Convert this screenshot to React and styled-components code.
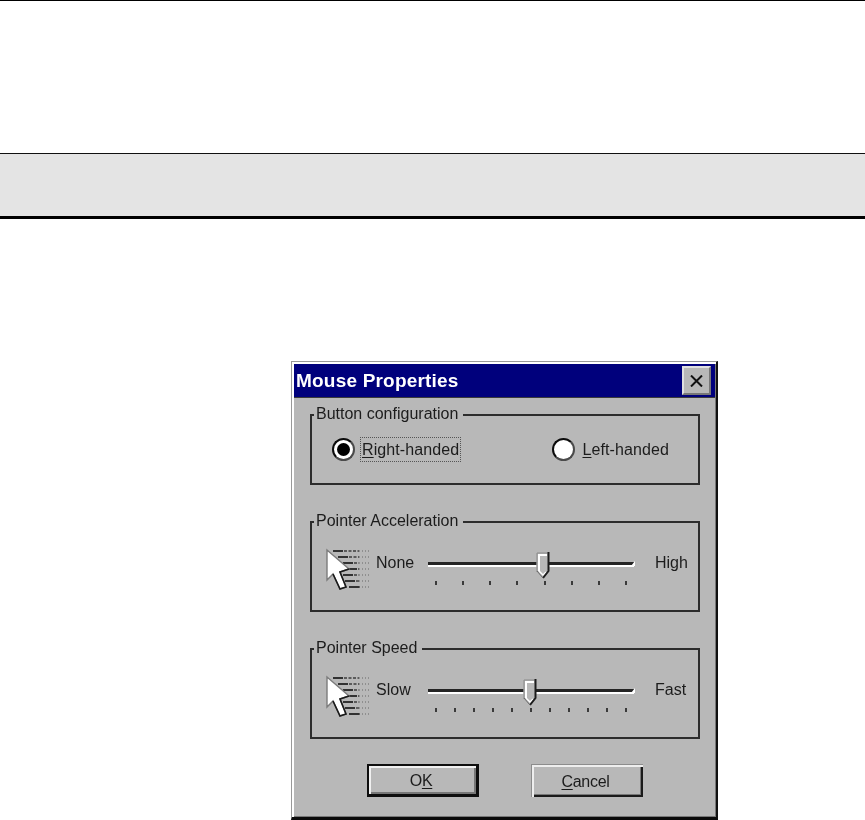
import React from "react";
import styled, { createGlobalStyle } from "styled-components";

const GlobalStyle = createGlobalStyle`
  html, body {
    margin: 0;
    padding: 0;
    background: #fff;
  }
  body {
    font-family: "Liberation Sans", Arial, sans-serif;
    font-size: 16px;
    color: #1c1c1c;
  }
`;

const Page = styled.div`
  width: 865px;
  height: 820px;
  overflow: hidden;
  border-top: 1px solid #000;
  box-sizing: border-box;
`;

const Band = styled.div`
  height: 62px;
  margin-top: 152px;
  background: #e4e4e4;
  border-top: 1px solid #111;
  border-bottom: 3px solid #000;
`;

const Dialog = styled.div`
  box-sizing: border-box;
  width: 427px;
  height: 459px;
  margin: 142px 0 0 291px;
  background: #b8b8b8;
  border-style: solid;
  border-width: 1px 2px 3px 1px;
  border-color: #999 #111 #0a0a0a #999;
  box-shadow: inset 2px 2px 0 #fff, inset -1px -1px 0 #777;
  padding: 2px 1px 0 2px;
  filter: blur(0.45px);
`;

const TitleBar = styled.div`
  height: 34px;
  background: #00007c;
  border-bottom: 1px solid #3a3a3a;
  box-sizing: border-box;
  display: flex;
  align-items: center;
  justify-content: space-between;
  padding: 0 4px 0 2px;
`;

const Title = styled.span`
  color: #fff;
  font-weight: 700;
  font-size: 19px;
  letter-spacing: 0.2px;
`;

const CloseButton = styled.div`
  box-sizing: border-box;
  width: 29px;
  height: 29px;
  display: flex;
  align-items: center;
  justify-content: center;
  background: #b8b8b8;
  border-style: solid;
  border-width: 2px;
  border-color: #e0e0e0 #777 #777 #e0e0e0;
`;

const Body = styled.div`
  padding: 16px 15px 0 16px;
  display: flex;
  flex-direction: column;
  gap: 36px;
`;

const Group = styled.div`
  position: relative;
  box-sizing: border-box;
  height: ${(p) => p.$height}px;
  border: 2px solid #2c2c2c;
`;

const Legend = styled.span`
  position: absolute;
  top: -11px;
  left: 2px;
  padding: 0 5px 0 2px;
  line-height: 18px;
  background: #b8b8b8;
`;

const RadioRow = styled.div`
  height: 100%;
  display: flex;
  align-items: center;
  justify-content: space-between;
  padding: 0 28px 0 20px;
`;

const RadioOption = styled.div`
  display: flex;
  align-items: center;
  gap: 6px;
`;

const RadioMark = styled.span`
  box-sizing: border-box;
  width: 23px;
  height: 23px;
  border-radius: 50%;
  background: #fff;
  border: 2px solid #0c0c0c;
  border-right-color: #4a4a4a;
  border-bottom-color: #4a4a4a;
  display: flex;
  align-items: center;
  justify-content: center;
  &::after {
    content: "";
    display: ${(p) => (p.$checked ? "block" : "none")};
    width: 13px;
    height: 13px;
    border-radius: 50%;
    background: #000;
  }
`;

const RadioLabel = styled.span`
  line-height: 23px;
  padding: 0 1px;
  letter-spacing: 0.1px;
  outline: ${(p) => (p.$focused ? "1px dotted #555" : "none")};
`;

const Mnemonic = styled.u`
  text-underline-offset: 2px;
`;

const SliderRow = styled.div`
  display: flex;
  align-items: flex-start;
  padding: 24px 0 0 14px;
`;

const PointerIcon = styled.svg`
  width: 43px;
  height: 44px;
  flex: none;
  margin-right: 7px;
`;

const RowLabel = styled.span`
  width: ${(p) => p.$width}px;
  flex: none;
  line-height: 18px;
  margin-top: 7px;
`;

const Slider = styled.div`
  position: relative;
  width: 206px;
  height: 44px;
  flex: none;
  margin-right: 21px;
`;

const Track = styled.div`
  position: relative;
  margin-top: 15px;
  height: 5px;
  box-sizing: border-box;
  border-top: 3px solid #242424;
  border-bottom: 2px solid #fff;
  &::after {
    content: "";
    position: absolute;
    right: -1px;
    top: -4px;
    border-left: 4px solid transparent;
    border-bottom: 5px solid #fff;
  }
`;

const Ticks = styled.div`
  position: absolute;
  left: 7px;
  width: 192px;
  top: 34px;
  display: flex;
  justify-content: space-between;
`;

const Tick = styled.i`
  display: block;
  width: 2px;
  height: 4px;
  background: #3a3a3a;
`;

const Thumb = styled.svg`
  position: absolute;
  top: 5px;
  width: 14px;
  height: 27px;
`;

const ButtonRow = styled.div`
  display: flex;
  justify-content: center;
  gap: 52px;
  margin-top: -11px;
`;

const Button = styled.button`
  box-sizing: border-box;
  width: 112px;
  height: 33px;
  padding: 2px 3px 0 0;
  font: inherit;
  letter-spacing: -0.3px;
  color: inherit;
  background: #b8b8b8;
  border: ${(p) => (p.$default ? "2px solid #0e0e0e" : "none")};
  border-bottom-width: ${(p) => (p.$default ? "3px" : "0")};
  border-right-width: ${(p) => (p.$default ? "3px" : "0")};
  box-shadow: ${(p) =>
    p.$default
      ? "inset 2px 2px 0 #f0f0f0, inset -2px -2px 0 #777"
      : "inset 1px 1px 0 #8c8c8c, inset 3px 3px 0 #eee, inset -2px -2px 0 #1a1a1a, inset -3px -3px 0 #777"};
`;

const LINES = [4, 10, 16, 22, 28, 34, 40];
const STARTS = [7, 12, 17, 21, 17, 19, 23];

const Pointer = () => (
  <PointerIcon viewBox="0 0 43 44">
    {LINES.map((y, i) => (
      <g key={y}>
        <line x1={STARTS[i]} x2={STARTS[i] + 10} y1={y} y2={y} stroke="#111" strokeWidth="1.6" />
        <line x1={STARTS[i] + 11} x2="33" y1={y} y2={y} stroke="#3c3c3c" strokeWidth="1.4" strokeDasharray="3 1.5" />
        <line x1="33" x2="43" y1={y} y2={y} stroke="#666" strokeWidth="1.2" strokeDasharray="1 2" />
      </g>
    ))}
    <path d="M1 3 L1 33 L7 27 L14 42 L20 40 L14 25 L23 22 Z" fill="#fff" stroke="#7c7c7c" strokeWidth="1.4" />
    <path d="M7 27 L14 42 L20 40 L14 25 L23 22" fill="none" stroke="#1a1a1a" strokeWidth="1.6" />
  </PointerIcon>
);

const SliderThumb = ({ left }) => (
  <Thumb viewBox="0 0 14 27" style={{ left }}>
    <path d="M0.5 0.5 H13 V19 L7 26 L0.5 19 Z" fill="#b8b8b8" />
    <path d="M1 20 V1 H12" fill="none" stroke="#8a8a8a" strokeWidth="1" />
    <path d="M3 19 V3 H11" fill="none" stroke="#fff" strokeWidth="2" />
    <path d="M3 19 L7 23 L10 20" fill="none" stroke="#fff" strokeWidth="1.4" />
    <path d="M12.5 0 V19 L7 26" fill="none" stroke="#1c1c1c" strokeWidth="2" />
    <path d="M1 19 L7 26" fill="none" stroke="#666" strokeWidth="1" />
  </Thumb>
);

const SliderGroup = ({ title, low, high, ticks, thumb }) => (
  <Group $height={91}>
    <Legend>{title}</Legend>
    <SliderRow>
      <Pointer />
      <RowLabel $width={52}>{low}</RowLabel>
      <Slider>
        <Track />
        <SliderThumb left={thumb} />
        <Ticks>
          {Array.from({ length: ticks }, (_, i) => (
            <Tick key={i} />
          ))}
        </Ticks>
      </Slider>
      <RowLabel $width={40}>{high}</RowLabel>
    </SliderRow>
  </Group>
);

const App = () => {
  return (
    <Page>
      <GlobalStyle />
      <Band />
      <Dialog>
        <TitleBar>
          <Title>Mouse Properties</Title>
          <CloseButton>
            <svg width="13" height="12" viewBox="0 0 13 12">
              <path d="M1 0.5 L12 11.5 M12 0.5 L1 11.5" stroke="#111" strokeWidth="2" />
            </svg>
          </CloseButton>
        </TitleBar>
        <Body>
          <Group $height={71}>
            <Legend>Button configuration</Legend>
            <RadioRow>
              <RadioOption>
                <RadioMark $checked />
                <RadioLabel $focused>
                  <Mnemonic>R</Mnemonic>ight-handed
                </RadioLabel>
              </RadioOption>
              <RadioOption>
                <RadioMark />
                <RadioLabel>
                  <Mnemonic>L</Mnemonic>eft-handed
                </RadioLabel>
              </RadioOption>
            </RadioRow>
          </Group>
          <SliderGroup title="Pointer Acceleration" low="None" high="High" ticks={8} thumb={108} />
          <SliderGroup title="Pointer Speed" low="Slow" high="Fast" ticks={11} thumb={95} />
          <ButtonRow>
            <Button $default>
              O<Mnemonic>K</Mnemonic>
            </Button>
            <Button>
              <Mnemonic>C</Mnemonic>ancel
            </Button>
          </ButtonRow>
        </Body>
      </Dialog>
    </Page>
  );
};

export default App;
